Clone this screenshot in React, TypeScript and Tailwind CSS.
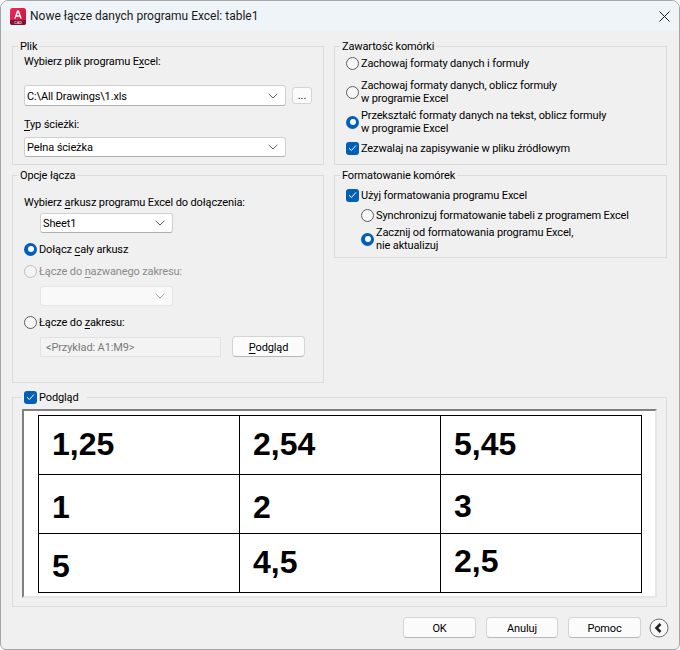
import React from "react";

const U = ({ children }: { children: React.ReactNode }) => <span className="underline underline-offset-2">{children}</span>;
const T = ({ children }: { children?: React.ReactNode }) => <span className="inline-block translate-y-px whitespace-nowrap">{children}</span>;

function Chevron({ color = "#5c5c5c" }: { color?: string }) {
  return (
    <svg width="10" height="6" viewBox="0 0 10 6" fill="none" className="shrink-0">
      <path d="M0.7 0.8 L5 5 L9.3 0.8" stroke={color} strokeWidth="1" />
    </svg>
  );
}

function Combo({ text, w, h = "h-[20px]", disabled = false, mt }: { text?: string; w: string; h?: string; disabled?: boolean; mt: string }) {
  return (
    <div className={`${w} ${h} ${mt} flex items-center justify-between pl-[2px] pr-[7px] rounded-[3px] border ${disabled ? "border-[#e5e5e5] bg-[#f9f9f9]" : "border-[#d0d0d0] border-b-[#b0b0b0] bg-white"}`}>
      <T>{text}</T>
      <Chevron color={disabled ? "#a8a8a8" : "#5c5c5c"} />
    </div>
  );
}

function Radio({ on = false, disabled = false }: { on?: boolean; disabled?: boolean }) {
  if (on) {
    return (
      <span className="w-[13px] h-[13px] rounded-full bg-[#005fb8] flex items-center justify-center shrink-0">
        <span className="w-[6px] h-[6px] rounded-full bg-white" />
      </span>
    );
  }
  return <span className={`w-[13px] h-[13px] rounded-full border shrink-0 ${disabled ? "border-[#bdbdbd] bg-[#f4f4f4]" : "border-[#5c5c5c] bg-[#f7f7f7]"}`} />;
}

function Check() {
  return (
    <span className="w-[13px] h-[13px] rounded-[3px] bg-[#005fb8] flex items-center justify-center shrink-0">
      <svg width="9" height="8" viewBox="0 0 9 8" fill="none">
        <path d="M1 4.2 L3.4 6.5 L8 1.4" stroke="#fff" strokeWidth="1" />
      </svg>
    </span>
  );
}

function Button({ children, w = "w-[73px]" }: { children: React.ReactNode; w?: string }) {
  return (
    <div className={`${w} h-[21px] flex items-center justify-center rounded-[4px] border border-[#d4d4d4] border-b-[#b8b8b8] bg-[#fbfbfb]`}>
      <T>{children}</T>
    </div>
  );
}

function Group({ title, h, children }: { title: string; h: string; children: React.ReactNode }) {
  return (
    <fieldset className={`${h} border border-[#dcdcdc]`}>
      <legend className="ml-[5px] px-[2px] h-[16px] leading-[16px]"><T>{title}</T></legend>
      <div className="px-[11px]">{children}</div>
    </fieldset>
  );
}

const cells = [
  { t: "1,25", c: "pt-[10px]" },
  { t: "2,54", c: "pt-[10px]" },
  { t: "5,45", c: "pt-[10px]" },
  { t: "1", c: "pt-[14px]" },
  { t: "2", c: "pt-[14px]" },
  { t: "3", c: "pt-[13px]" },
  { t: "5", c: "pt-[14px]" },
  { t: "4,5", c: "pt-[10px]" },
  { t: "2,5", c: "pt-[9px]" },
];

export default function App() {
  return (
    <div className="w-[680px] h-[650px] bg-[#f0f0f0] border border-[#a6a6a6] rounded-t-[8px] rounded-b-[6px] overflow-hidden text-black text-[11px] tracking-[-0.13px] leading-[16px] font-['Roboto','Liberation_Sans',sans-serif]">
      <div className="h-[30px] bg-[#eff4f9] flex items-center pl-[9px] pr-[9px]">
        <svg width="16" height="17" viewBox="0 0 16 17" className="shrink-0">
          <defs>
            <linearGradient id="lg" x1="0" y1="0" x2="1" y2="1">
              <stop offset="0" stopColor="#f0285a" />
              <stop offset="1" stopColor="#c8103c" />
            </linearGradient>
          </defs>
          <rect x="0" y="0" width="16" height="17" rx="2.5" fill="url(#lg)" />
          <path d="M0 12 H16 V14.5 A2.5 2.5 0 0 1 13.5 17 H2.5 A2.5 2.5 0 0 1 0 14.5 Z" fill="#7d1330" />
          <path d="M4.2 10.5 L7 2.5 H9 L11.8 10.5 H10.2 L9.6 8.7 H6.4 L5.8 10.5 Z M6.9 7.3 H9.1 L8 4.2 Z" fill="#fff" />
          <text x="8" y="15.8" textAnchor="middle" fontSize="3.6" fontWeight="700" fill="#f3c6d2" fontFamily="Liberation Sans, sans-serif">CAD</text>
        </svg>
        <span className="ml-[4px] text-[12px] tracking-normal text-[#1a1a1a] whitespace-nowrap">Nowe łącze danych programu Excel: table1</span>
        <svg width="11" height="11" viewBox="0 0 11 11" className="ml-auto" fill="none">
          <path d="M0.5 0.5 L10.5 10.5 M10.5 0.5 L0.5 10.5" stroke="#1a1a1a" strokeWidth="1" />
        </svg>
      </div>

      <div className="pt-[7px] pl-[11px]">
        <div className="flex gap-[10px]">
          <div className="w-[312px] flex flex-col gap-[2px]">
            <Group title="Plik" h="h-[127px]">
              <div className="-mt-px"><T>Wybierz plik programu E<U>x</U>cel:</T></div>
              <div className="flex gap-[6px] mt-[16px] items-center">
                <Combo text="C:\All Drawings\1.xls" w="w-[262px]" h="h-[21px]" mt="" />
                <div className="w-[20px] h-[17px] rounded-[3px] border border-[#d4d4d4] bg-[#fbfbfb] flex items-center justify-center leading-[12px]">...</div>
              </div>
              <div className="mt-[10px]"><T><U>T</U>yp ścieżki:</T></div>
              <Combo text="Pełna ścieżka" w="w-[262px]" mt="mt-[5px]" />
            </Group>
            <Group title="Opcje łącza" h="h-[216px]">
              <div className="mt-[11px]"><T>Wybierz <U>a</U>rkusz programu Excel do dołączenia:</T></div>
              <div className="pl-[16px]"><Combo text="Sheet1" w="w-[133px]" mt="mt-[3px]" /></div>
              <div className="mt-[8px] flex items-center gap-[2px]"><Radio on /><T>Dołącz <U>c</U>ały arkusz</T></div>
              <div className="mt-[6px] flex items-center gap-[2px] text-[#8a8a8a]"><Radio disabled /><T>Łącze do <U>n</U>azwanego zakresu:</T></div>
              <div className="pl-[16px]"><Combo w="w-[133px]" disabled mt="mt-[7px]" /></div>
              <div className="mt-[8px] flex items-center gap-[2px]"><Radio /><T>Łącze do <U>z</U>akresu:</T></div>
              <div className="pl-[16px] mt-[6px] flex items-center gap-[11px]">
                <div className="w-[181px] h-[20px] bg-[#f3f3f3] border border-[#e2e2e2] flex items-center pl-[5px] text-[#7a7a7a]"><T>&lt;Przykład: A1:M9&gt;</T></div>
                <Button><U>P</U>odgląd</Button>
              </div>
            </Group>
          </div>
          <div className="w-[333px] flex flex-col gap-[2px]">
            <Group title="Zawartość komórki" h="h-[127px]">
              <div className="mt-[1px] flex items-center gap-[2px]"><Radio /><T>Zachowaj formaty danych i formuły</T></div>
              <div className="mt-[8px] flex items-center gap-[2px] leading-[13px]"><Radio /><span>Zachowaj formaty danych, oblicz formuły<br />w programie Excel</span></div>
              <div className="mt-[4px] flex items-center gap-[2px] leading-[13px]"><Radio on /><span>Przekształć formaty danych na tekst, oblicz formuły<br />w programie Excel</span></div>
              <div className="mt-[5px] flex items-center gap-[2px]"><Check /><T>Zezwalaj na zapisywanie w pliku źródłowym</T></div>
            </Group>
            <Group title="Formatowanie komórek" h="h-[91px]">
              <div className="mt-[4px] flex items-center gap-[2px]"><Check /><T>Użyj formatowania programu Excel</T></div>
              <div className="mt-[4px] pl-[15px] flex items-center gap-[2px]"><Radio /><T>Synchronizuj formatowanie tabeli z programem Excel</T></div>
              <div className="mt-[3px] pl-[15px] flex items-center gap-[2px] leading-[13px]"><Radio on /><span>Zacznij od formatowania programu Excel,<br />nie aktualizuj</span></div>
            </Group>
          </div>
        </div>

        <fieldset className="mt-[6px] w-[655px] h-[218px] border border-[#dcdcdc]">
          <legend className="ml-[9px] pl-[2px] pr-[9px] h-[16px] flex items-center gap-[2px]"><Check /><T>Podgląd</T></legend>
          <div className="ml-[9px] mt-[4px] w-[635px] h-[189px] bg-white border-2 border-t-[#808080] border-l-[#808080] border-r-[#e6e6e6] border-b-[#e6e6e6] pl-[14px] pt-[4px]">
            <div className="w-[604px] h-[178px] grid grid-cols-[200px_200px_200px] grid-rows-[58px_58px_58px] gap-px bg-black border border-black font-['Liberation_Sans',sans-serif] font-bold tracking-normal text-[32px] leading-[36px]">
              {cells.map((c, i) => (
                <div key={i} className={`bg-white pl-[13px] ${c.c}`}>{c.t}</div>
              ))}
            </div>
          </div>
        </fieldset>

        <div className="mt-[10px] flex items-center gap-[10px] w-[657px]">
          <div className="ml-auto" />
          <Button>OK</Button>
          <Button w="w-[72px]">Anuluj</Button>
          <Button>Pomoc</Button>
          <svg width="20" height="20" viewBox="0 0 20 20" fill="none" className="-ml-[2px]">
            <circle cx="10" cy="10" r="9" fill="#f8f8f8" stroke="#6f6f6f" strokeWidth="1" />
            <path d="M11.5 6 L7.5 10 L11.5 14" stroke="#222" strokeWidth="2.6" />
          </svg>
        </div>
      </div>
    </div>
  );
}
